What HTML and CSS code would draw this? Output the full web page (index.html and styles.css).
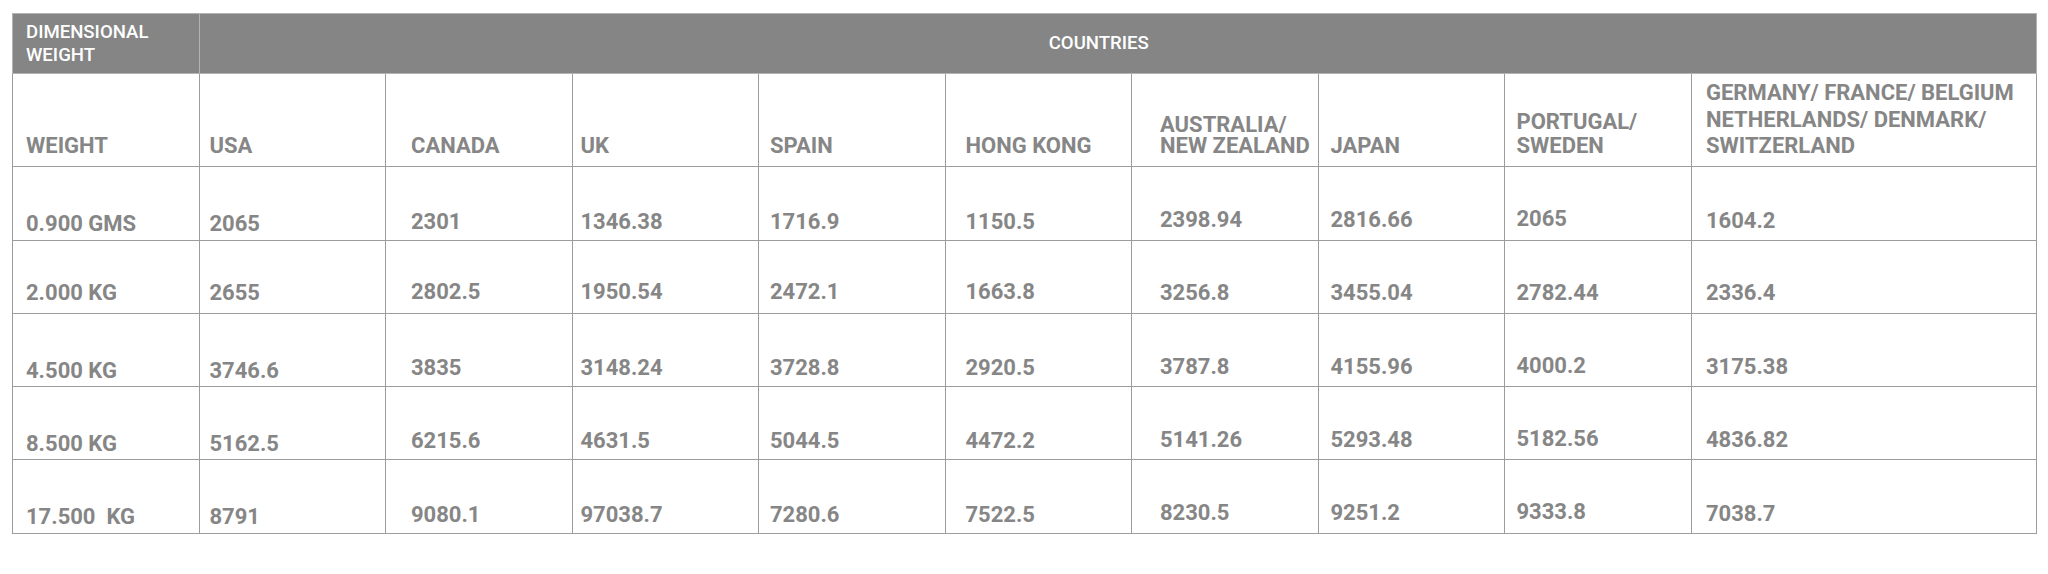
FILE: index.html
```html
<!DOCTYPE html>
<html lang="en">
<head>
<meta charset="utf-8">
<title>Dimensional Weight Rates</title>
<link rel="stylesheet" href="styles.css">
</head>
<body>
<div class="page">
  <table class="rates">
    <colgroup>
      <col class="c-std"><col class="c-std"><col class="c-std"><col class="c-std"><col class="c-std">
      <col class="c-std"><col class="c-std"><col class="c-std"><col class="c-std"><col class="c-wide">
    </colgroup>
    <thead>
      <tr class="row-band">
        <th class="band band-left">DIMENSIONAL<br>WEIGHT</th>
        <th class="band band-countries" colspan="9">COUNTRIES</th>
      </tr>
      <tr class="row-heads">
        <th>WEIGHT</th>
        <th>USA</th>
        <th>CANADA</th>
        <th>UK</th>
        <th>SPAIN</th>
        <th>HONG KONG</th>
        <th class="lh-tight">AUSTRALIA/<br>NEW ZEALAND</th>
        <th>JAPAN</th>
        <th class="lh-mid">PORTUGAL/<br>SWEDEN</th>
        <th class="lh-loose">GERMANY/ FRANCE/ BELGIUM<br>NETHERLANDS/ DENMARK/<br>SWITZERLAND</th>
      </tr>
    </thead>
    <tbody>
      <tr class="row-data">
        <td>0.900 GMS</td><td>2065</td><td>2301</td><td>1346.38</td><td>1716.9</td>
        <td>1150.5</td><td>2398.94</td><td>2816.66</td><td>2065</td><td>1604.2</td>
      </tr>
      <tr class="row-data row-raised">
        <td>2.000 KG</td><td>2655</td><td>2802.5</td><td>1950.54</td><td>2472.1</td>
        <td>1663.8</td><td>3256.8</td><td>3455.04</td><td>2782.44</td><td>2336.4</td>
      </tr>
      <tr class="row-data">
        <td>4.500 KG</td><td>3746.6</td><td>3835</td><td>3148.24</td><td>3728.8</td>
        <td>2920.5</td><td>3787.8</td><td>4155.96</td><td>4000.2</td><td>3175.38</td>
      </tr>
      <tr class="row-data">
        <td>8.500 KG</td><td>5162.5</td><td>6215.6</td><td>4631.5</td><td>5044.5</td>
        <td>4472.2</td><td>5141.26</td><td>5293.48</td><td>5182.56</td><td>4836.82</td>
      </tr>
      <tr class="row-data">
        <td>17.500&nbsp; KG</td><td>8791</td><td>9080.1</td><td>97038.7</td><td>7280.6</td>
        <td>7522.5</td><td>8230.5</td><td>9251.2</td><td>9333.8</td><td>7038.7</td>
      </tr>
    </tbody>
  </table>
</div>
</body>
</html>
```

FILE: styles.css
```css
html, body {
  margin: 0;
  padding: 0;
  background: #ffffff;
}

.page {
  padding: 13px 12px 0 12px;
}

.rates {
  border-collapse: collapse;
  table-layout: fixed;
  width: 2024px;
  font-family: Roboto, "Liberation Sans", Arial, sans-serif;
  color: #868686;
}

.c-std { width: 186.5px; }
.c-wide { width: 345.5px; }

.rates th,
.rates td {
  border: 1px solid #9c9c9c;
  text-align: left;
  vertical-align: bottom;
  font-weight: 700;
  font-size: 22px;
  line-height: 22px;
  padding: 0;
  white-space: nowrap;
}

/* top band */
.row-band { height: 60px; }

.rates .band {
  background: #858585;
  color: #ffffff;
  font-size: 18.6px;
  font-weight: 500;
  line-height: 23px;
  vertical-align: middle;
  border-color: #b3b3b3;
}

.rates .band-left {
  padding-left: 13px;
}

.rates .band-countries {
  text-align: center;
  padding: 0 51px 0 13px;
}

/* column headers */
.row-heads { height: 93.3px; }

.row-heads th { padding-bottom: 9px; }

.row-heads th.lh-tight { line-height: 21.5px; padding-bottom: 9.5px; }
.row-heads th.lh-mid { line-height: 24px; padding-bottom: 8px; }
.row-heads th.lh-loose { line-height: 26.3px; padding-bottom: 7px; }

/* data rows */
.row-data { height: 73.3px; }

.row-data td:nth-child(1),
.row-data td:nth-child(2) { padding-bottom: 4.5px; }
.row-data td:nth-child(3),
.row-data td:nth-child(4),
.row-data td:nth-child(5),
.row-data td:nth-child(6) { padding-bottom: 7px; }
.row-data td:nth-child(7),
.row-data td:nth-child(8) { padding-bottom: 8.5px; }
.row-data td:nth-child(9) { padding-bottom: 9.5px; }
.row-data td:nth-child(10) { padding-bottom: 8px; }

.row-data.row-raised td { padding-bottom: 8.5px; }
.row-data.row-raised td:nth-child(3),
.row-data.row-raised td:nth-child(4),
.row-data.row-raised td:nth-child(5),
.row-data.row-raised td:nth-child(6) { padding-bottom: 10px; }

/* per-column text inset, shared by headers and data */
.row-heads th:nth-child(1), .row-data td:nth-child(1) { padding-left: 13px; }
.row-heads th:nth-child(2), .row-data td:nth-child(2) { padding-left: 10px; }
.row-heads th:nth-child(3), .row-data td:nth-child(3) { padding-left: 25px; }
.row-heads th:nth-child(4), .row-data td:nth-child(4) { padding-left: 8px; }
.row-heads th:nth-child(5), .row-data td:nth-child(5) { padding-left: 11px; }
.row-heads th:nth-child(6), .row-data td:nth-child(6) { padding-left: 20px; }
.row-heads th:nth-child(7), .row-data td:nth-child(7) { padding-left: 28px; }
.row-heads th:nth-child(8), .row-data td:nth-child(8) { padding-left: 12px; }
.row-heads th:nth-child(9), .row-data td:nth-child(9) { padding-left: 11.5px; }
.row-heads th:nth-child(10), .row-data td:nth-child(10) { padding-left: 14.5px; }
```
